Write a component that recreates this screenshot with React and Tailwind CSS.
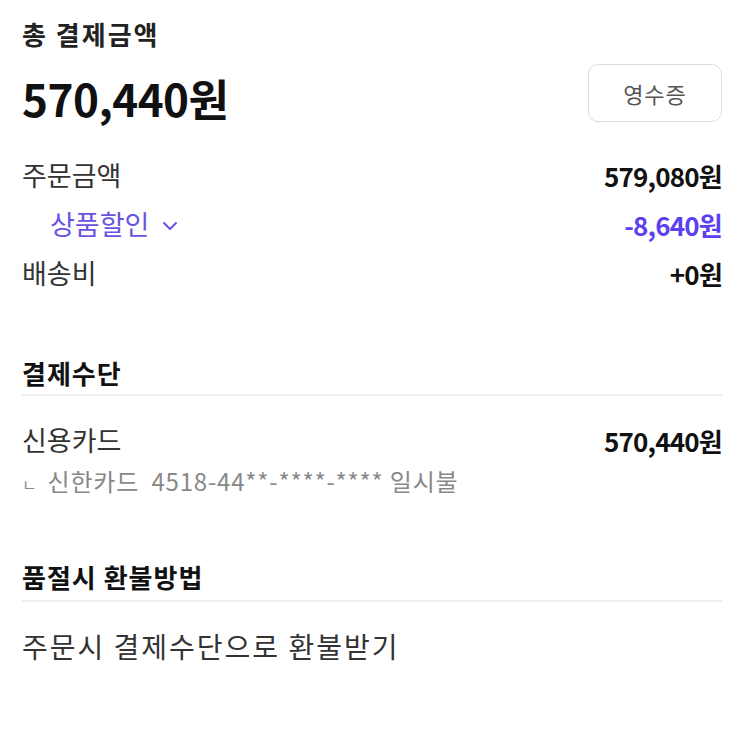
const font = "font-['Noto_Sans_CJK_KR','Noto_Sans',sans-serif]"

function SummaryRow({ label, amount, tone = 'default', indent = false, chevron = false }) {
  const purple = tone === 'purple'
  return (
    <div className="flex items-center justify-between h-[49px]">
      <div className={`flex items-center gap-[13px] text-[27px] ${indent ? 'pl-[28px]' : ''} ${purple ? 'text-[#6a52e0]' : 'text-[#333]'}`}>
        <span>{label}</span>
        {chevron && (
          <svg width="16" height="16" viewBox="0 0 16 16" fill="none" className="mt-[2px]">
            <path d="M2 5l6 6 6-6" stroke="#6a52e0" strokeWidth="2" strokeLinecap="round" strokeLinejoin="round" />
          </svg>
        )}
      </div>
      <span className={`text-[26px] font-bold tracking-[-0.8px] ${purple ? 'text-[#5b3ff0]' : 'text-[#111]'}`}>{amount}</span>
    </div>
  )
}

function SectionTitle({ children, pb }) {
  return (
    <div className={`border-b-2 border-[#eeeeee] ${pb}`}>
      <h3 className="text-[26px] font-bold text-[#111] leading-[32px] tracking-[1px]">{children}</h3>
    </div>
  )
}

export default function App() {
  return (
    <div className={`${font} bg-white w-[750px] h-[732px] pl-[22px] pr-[28px] pt-[16px]`}>
      <h2 className="text-[26px] font-bold text-[#222] leading-[36px] tracking-[2px]">총 결제금액</h2>
      <div className="flex items-start justify-between mt-[12px]">
        <span className="mt-[8px] text-[44px] font-bold text-[#111] leading-[52px] tracking-[-0.5px]">570,440원</span>
        <button className="w-[134px] h-[58px] rounded-[10px] border border-[#dddddd] bg-white text-[22px] text-[#555] tracking-[1px]">
          영수증
        </button>
      </div>

      <div className="mt-[27px]">
        <SummaryRow label="주문금액" amount="579,080원" />
        <SummaryRow label="상품할인" amount="-8,640원" tone="purple" indent chevron />
        <SummaryRow label="배송비" amount="+0원" />
      </div>

      <div className="mt-[59px]">
        <SectionTitle pb="pb-[5px]">결제수단</SectionTitle>
        <div className="flex items-center justify-between mt-[26px] h-[36px]">
          <span className="text-[27px] text-[#333]">신용카드</span>
          <span className="text-[26px] font-bold text-[#111] tracking-[-0.8px]">570,440원</span>
        </div>
        <div className="text-[24px] text-[#888] mt-[7px] leading-[32px] tracking-[0.8px]">
          <span className="text-[16px] mr-[10px]">ㄴ</span>신한카드&nbsp;&nbsp;4518-44**-****-**** 일시불
        </div>
      </div>

      <div className="mt-[61px]">
        <SectionTitle pb="pb-[7px]">품절시 환불방법</SectionTitle>
        <div className="text-[28px] text-[#333] mt-[26px] leading-[36px] tracking-[2px]">주문시 결제수단으로 환불받기</div>
      </div>
    </div>
  )
}
